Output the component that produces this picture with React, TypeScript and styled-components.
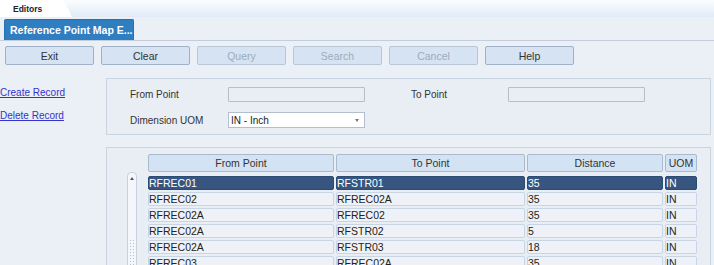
import React from 'react';
import styled, { createGlobalStyle } from 'styled-components';

const GlobalStyle = createGlobalStyle`
    html, body {
        margin: 0;
        padding: 0;
        height: 265px;
        overflow: hidden;
        background: #ebeff6;
        font-family: "Liberation Sans", Arial, sans-serif;
        font-size: 10px;
        color: #333;
    }
`;

type Row = { from: string; to: string; distance: string; uom: string };

const rows: Row[] = [
    { from: 'RFREC01', to: 'RFSTR01', distance: '35', uom: 'IN' },
    { from: 'RFREC02', to: 'RFREC02A', distance: '35', uom: 'IN' },
    { from: 'RFREC02A', to: 'RFREC02', distance: '35', uom: 'IN' },
    { from: 'RFREC02A', to: 'RFSTR02', distance: '5', uom: 'IN' },
    { from: 'RFREC02A', to: 'RFSTR03', distance: '18', uom: 'IN' },
    { from: 'RFREC03', to: 'RFREC02A', distance: '35', uom: 'IN' },
];

const buttons = [
    { label: 'Exit', disabled: false },
    { label: 'Clear', disabled: false },
    { label: 'Query', disabled: true },
    { label: 'Search', disabled: true },
    { label: 'Cancel', disabled: true },
    { label: 'Help', disabled: false },
];

// Styled components
const Page = styled.div`
    height: 265px;
    overflow: hidden;
`;

const TopStrip = styled.div`
    height: 17px;
    background: linear-gradient(#fbfdff, #e0ebf7);
    display: flex;
    align-items: flex-end;
`;

const EditorsTab = styled.div`
    position: relative;
    height: 17px;
    width: 60px;
    background: #fff;
    font-weight: bold;
    font-size: 8.5px;
    color: #222;
    display: flex;
    align-items: center;
    padding-left: 13px;
    box-sizing: border-box;

    &::after {
        content: '';
        position: absolute;
        top: 0;
        right: -8px;
        width: 12px;
        height: 17px;
        background: #fff;
        transform: skewX(25deg);
        border-top-right-radius: 4px;
    }
`;

const TitleBar = styled.div`
    height: 24px;
    padding: 3px 0 0 4px;
    box-sizing: border-box;
    border-bottom: 1px solid #c3cddb;
    display: flex;
    align-items: flex-end;
`;

const TitleTab = styled.div`
    height: 21px;
    width: 130px;
    box-sizing: border-box;
    background: #2f7ec2;
    border: 1px solid #2a70ad;
    border-bottom: none;
    border-radius: 2px 2px 0 0;
    color: #fff;
    font-weight: bold;
    font-size: 10.5px;
    display: flex;
    align-items: center;
    padding-left: 5px;
    white-space: nowrap;
`;

const Toolbar = styled.div`
    display: flex;
    gap: 7px;
    padding: 5px 0 0 5px;
`;

const ToolButton = styled.button<{ $disabled: boolean }>`
    width: 89px;
    height: 19px;
    box-sizing: border-box;
    background: #d5e3f2;
    border: 1px solid ${p => (p.$disabled ? '#b8c6d7' : '#9fb1c6')};
    border-radius: 2px;
    color: ${p => (p.$disabled ? '#a0abb9' : '#333')};
    font-family: "Liberation Sans", Arial, sans-serif;
    font-size: 10.5px;
    padding: 0;
    cursor: ${p => (p.$disabled ? 'default' : 'pointer')};
`;

const Body = styled.div`
    display: flex;
    margin-top: 13px;
`;

const Sidebar = styled.div`
    width: 106px;
    display: flex;
    flex-direction: column;
    gap: 12px;
    padding-top: 9px;
`;

const SideLink = styled.a`
    color: #3434c8;
    text-decoration: underline;
    font-size: 10px;
    line-height: 11px;
    cursor: pointer;
`;

const Main = styled.div`
    width: 605px;
    display: flex;
    flex-direction: column;
    gap: 12px;
`;

const Panel = styled.div`
    border: 1px solid #c9d4e2;
    background: #e9eef5;
    box-sizing: border-box;
`;

const FormPanel = styled(Panel)`
    height: 57px;
    display: grid;
    grid-template-columns: 98px 137px 46px 97px 137px;
    grid-template-rows: 15px 16px;
    row-gap: 10px;
    align-items: center;
    padding: 8px 0 0 23px;
`;

const Label = styled.span`
    font-size: 10px;
    color: #333;
`;

const TextInput = styled.div`
    height: 15px;
    box-sizing: border-box;
    border: 1px solid #b3bfcd;
    border-radius: 1px;
    background: #e9eef5;
`;

const SelectBox = styled.div`
    height: 16px;
    box-sizing: border-box;
    border: 1px solid #b3bfcd;
    background: #fff;
    display: flex;
    align-items: center;
    justify-content: space-between;
    padding: 0 5px 0 2px;
    font-size: 10px;
    color: #222;
`;

const Caret = styled.span`
    width: 0;
    height: 0;
    border-left: 2.5px solid transparent;
    border-right: 2.5px solid transparent;
    border-top: 3px solid #777;
`;

const GridPanel = styled(Panel)`
    height: 130px;
    display: flex;
    padding: 6px 0 0 20px;
`;

const ScrollTrack = styled.div`
    position: relative;
    width: 10px;
    height: 100px;
    margin: 18px 11px 0 0;
    box-sizing: border-box;
    background: #f3f6fa;
    border: 1px solid #c8d2de;
    border-radius: 4px 4px 0 0;
`;

const ScrollArrow = styled.span`
    position: absolute;
    top: 4px;
    left: 2px;
    width: 0;
    height: 0;
    border-left: 2.5px solid transparent;
    border-right: 2.5px solid transparent;
    border-bottom: 3px solid #555;
`;

const ScrollGrip = styled.span`
    position: absolute;
    top: 66px;
    left: 1px;
    width: 6px;
    height: 26px;
    background-image: radial-gradient(#b8c2ce 0.8px, transparent 1px);
    background-size: 3px 3px;
`;

const Table = styled.div`
    display: grid;
    grid-template-columns: 186px 189px 136px 32px;
    grid-template-rows: 20px;
    grid-auto-rows: 14px;
    column-gap: 2px;
    row-gap: 2px;
    align-content: start;
`;

const HeaderCell = styled.div`
    height: 18px;
    align-self: start;
    box-sizing: border-box;
    background: #d3e3f3;
    border: 1px solid #a8bace;
    border-radius: 2px;
    display: flex;
    align-items: center;
    justify-content: center;
    font-size: 10.5px;
    color: #333;
`;

const Cell = styled.div<{ $selected: boolean }>`
    box-sizing: border-box;
    height: 14px;
    border: 1px solid ${p => (p.$selected ? '#2b4a74' : '#c8d5e4')};
    border-radius: 2px;
    background: ${p => (p.$selected ? '#37567f' : '#eef2f8')};
    color: ${p => (p.$selected ? '#fff' : '#222')};
    font-size: 10.5px;
    line-height: 12px;
    white-space: nowrap;
    overflow: hidden;
`;

const TableRow = styled.div`
    display: contents;
`;

export default function App() {
    return (
        <Page>
            <GlobalStyle />
            <TopStrip>
                <EditorsTab>Editors</EditorsTab>
            </TopStrip>
            <TitleBar>
                <TitleTab>Reference Point Map E...</TitleTab>
            </TitleBar>
            <Toolbar>
                {buttons.map(b => (
                    <ToolButton key={b.label} disabled={b.disabled} $disabled={b.disabled}>
                        {b.label}
                    </ToolButton>
                ))}
            </Toolbar>
            <Body>
                <Sidebar>
                    <SideLink>Create Record</SideLink>
                    <SideLink>Delete Record</SideLink>
                </Sidebar>
                <Main>
                    <FormPanel>
                        <Label>From Point</Label>
                        <TextInput />
                        <span />
                        <Label>To Point</Label>
                        <TextInput />
                        <Label>Dimension UOM</Label>
                        <SelectBox>
                            IN - Inch
                            <Caret />
                        </SelectBox>
                    </FormPanel>
                    <GridPanel>
                        <ScrollTrack>
                            <ScrollArrow />
                            <ScrollGrip />
                        </ScrollTrack>
                        <Table>
                            <TableRow>
                                <HeaderCell>From Point</HeaderCell>
                                <HeaderCell>To Point</HeaderCell>
                                <HeaderCell>Distance</HeaderCell>
                                <HeaderCell>UOM</HeaderCell>
                            </TableRow>
                            {rows.map((r, i) => (
                                <TableRow key={i}>
                                    <Cell $selected={i === 0}>{r.from}</Cell>
                                    <Cell $selected={i === 0}>{r.to}</Cell>
                                    <Cell $selected={i === 0}>{r.distance}</Cell>
                                    <Cell $selected={i === 0}>{r.uom}</Cell>
                                </TableRow>
                            ))}
                        </Table>
                    </GridPanel>
                </Main>
            </Body>
        </Page>
    );
}
